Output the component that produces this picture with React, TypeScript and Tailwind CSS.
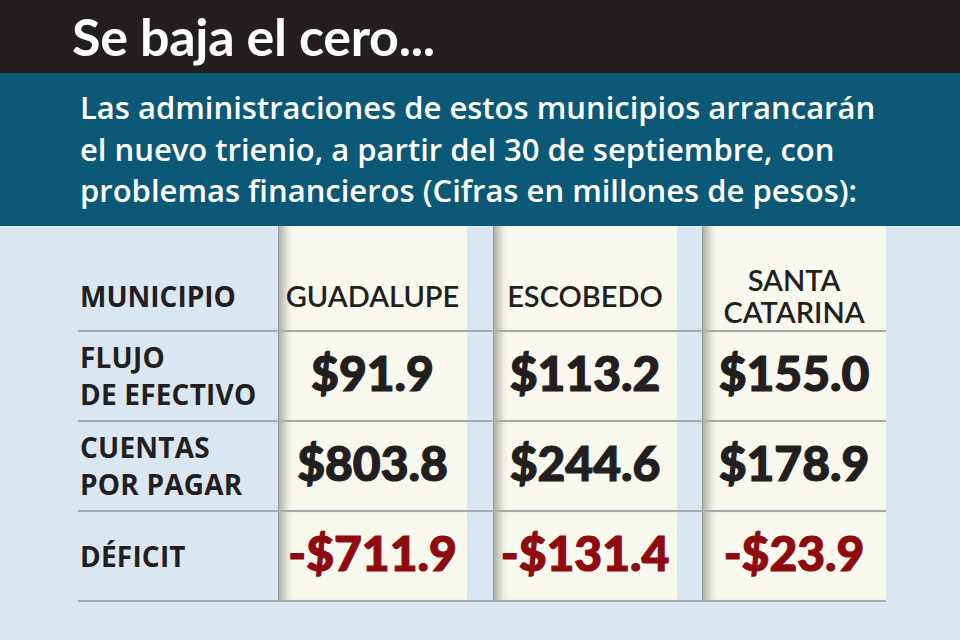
const rows = [
  { label: ["FLUJO", "DE EFECTIVO"], values: ["$91.9", "$113.2", "$155.0"], red: false },
  { label: ["CUENTAS", "POR PAGAR"], values: ["$803.8", "$244.6", "$178.9"], red: false },
  { label: ["DÉFICIT"], values: ["-$711.9", "-$131.4", "-$23.9"], red: true },
];

const colShadow =
  "bg-[#f9f8ef] shadow-[inset_1px_0_0_0_rgba(0,0,0,0.15),inset_12px_0_9px_-6px_rgba(0,0,0,0.32)]";

const Cell = ({ w, extra, children }: { w: string; extra?: string; children: React.ReactNode }) => (
  <div className={`${w} ${colShadow} flex items-center justify-center ${extra ?? ""}`}>{children}</div>
);

const App = () => {
  return (
    <div className="w-[960px] h-[640px] bg-[#dbe7f0] overflow-hidden font-['Open_Sans',sans-serif]">
      <div className="h-[73px] bg-[#231f20] flex items-center pl-[72px] pb-[2px]">
        <h1 className="text-white font-bold text-[52px] leading-none font-['Lato',sans-serif] tracking-[-0.3px]">Se baja el cero...</h1>
      </div>

      <div className="h-[153px] bg-[#0b5977] pl-[80px] pt-[14px]">
        <p className="text-white font-semibold text-[31px] leading-[41.5px]">
          Las administraciones de estos municipios arrancarán
          <br />
          el nuevo trienio, a partir del 30 de septiembre, con
          <br />
          problemas financieros (Cifras en millones de pesos):
        </p>
      </div>

      <div className="pl-[78px]">
        <div className="flex h-[106px] border-b-2 border-[#a6aaac] w-[808px]">
          <div className="w-[200px] flex items-center pt-[36px] pl-[2px]">
            <span className="font-bold text-[28px] text-[#231f20]">MUNICIPIO</span>
          </div>
          {[["GUADALUPE"], ["ESCOBEDO"], ["SANTA", "CATARINA"]].map((name, i) => (
            <div key={name[0]} className="contents">
              <Cell w={i === 0 ? "w-[189px]" : "w-[184px]"} extra="pt-[36px]">
                <span className="text-[29px] leading-[32px] text-[#231f20] text-center font-['Lato',sans-serif] font-semibold">
                  {name.map((n) => (
                    <span key={n} className="block">
                      {n}
                    </span>
                  ))}
                </span>
              </Cell>
              {i < 2 && <div className={i === 0 ? "w-[26px]" : "w-[25px]"} />}
            </div>
          ))}
        </div>

        {rows.map((r) => (
          <div key={r.label[0]} className="flex h-[90px] border-b-2 border-[#a6aaac] w-[808px]">
            <div className="w-[200px] flex items-center pl-[2px]">
              <span className="font-bold text-[28px] leading-[37px] text-[#231f20] tracking-[0.2px]">
                {r.label.map((l, j) => (
                  <span key={j} className="block">
                    {l}
                  </span>
                ))}
              </span>
            </div>
            {r.values.map((v, i) => (
              <div key={i} className="contents">
                <Cell w={i === 0 ? "w-[189px]" : "w-[184px]"}>
                  <span
                    className={`font-['Lato',sans-serif] font-black text-[48px] leading-none pb-[6px] [-webkit-text-stroke:1.2px_currentColor] ${
                      r.red ? "text-[#8e0b10]" : "text-[#231f20]"
                    }`}
                  >
                    {v}
                  </span>
                </Cell>
                {i < 2 && <div className={i === 0 ? "w-[26px]" : "w-[25px]"} />}
              </div>
            ))}
          </div>
        ))}
      </div>
    </div>
  );
};

export default App;
